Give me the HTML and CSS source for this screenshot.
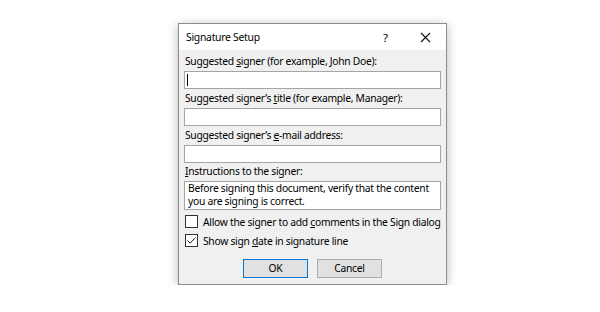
FILE: index.html
```html
<!DOCTYPE html>
<html lang="en">
<head>
    <meta charset="UTF-8">
    <title>Signature Setup</title>
    <link rel="stylesheet" href="styles.css">
</head>
<body>
    <div class="dialog">
        <div class="titlebar">
            <span class="title">Signature Setup</span>
            <span class="help">?</span>
            <svg class="close" width="11" height="11" viewBox="0 0 11 11">
                <path d="M1 1 L10 10 M10 1 L1 10" stroke="#111" stroke-width="1.1" fill="none"/>
            </svg>
        </div>
        <div class="content">
            <div class="field">
                <div class="label">Suggested <u>s</u>igner (for example, John Doe):</div>
                <div class="input"><span class="caret"></span></div>
            </div>
            <div class="field">
                <div class="label">Suggested signer’s <u>t</u>itle (for example, Manager):</div>
                <div class="input"></div>
            </div>
            <div class="field">
                <div class="label">Suggested signer’s <u>e</u>-mail address:</div>
                <div class="input"></div>
            </div>
            <div class="field notes">
                <div class="label"><u>I</u>nstructions to the signer:</div>
                <div class="input textarea">Before signing this document, verify that the content you are signing is correct.</div>
            </div>
            <div class="check-row first">
                <span class="checkbox"></span>
                <span>Allow the signer to add <u>c</u>omments in the Sign dialog</span>
            </div>
            <div class="check-row">
                <span class="checkbox">
                    <svg width="11" height="11" viewBox="0 0 11 11">
                        <path d="M1.5 5.5 L4.2 8.2 L9.5 2.5" stroke="#222" stroke-width="1" fill="none"/>
                    </svg>
                </span>
                <span>Show sign <u>d</u>ate in signature line</span>
            </div>
            <div class="buttons">
                <div class="button default">OK</div>
                <div class="button">Cancel</div>
            </div>
        </div>
    </div>
</body>
</html>
```

FILE: styles.css
```css
body {
    margin: 0;
    padding: 23px 0 0 178px;
    background: #ffffff;
    font-family: 'Noto Sans', 'Open Sans', sans-serif;
    font-size: 10.3px;
    letter-spacing: -0.28px;
    color: #000;
}
.dialog {
    width: 267px;
    height: 260px;
    background: #f0f0f0;
    border: 1px solid #8c8c8c;
    box-shadow: 0 2px 10px rgba(0, 0, 0, 0.28);
}
.titlebar {
    height: 26px;
    background: #ffffff;
    display: flex;
    align-items: center;
    padding: 0 0 0 7px;
}
.title {
    flex: 1;
    font-size: 10.4px;
}
.help {
    width: 12px;
    margin-right: 25px;
    font-size: 11.5px;
}
.close {
    margin-right: 15px;
}
.content {
    padding: 3px 5px 0 5px;
    display: flex;
    flex-direction: column;
}
.field {
    margin-bottom: 1px;
}
.label {
    height: 16px;
    line-height: 16px;
    margin-bottom: 2px;
    padding-left: 1px;
    white-space: nowrap;
}
.notes .label {
    margin-top: -1px;
}
.input {
    height: 16px;
    background: #fff;
    border: 1px solid #a5a5a5;
    position: relative;
}
.caret {
    position: absolute;
    left: 2px;
    top: 2px;
    width: 1px;
    height: 12px;
    background: #000;
}
.textarea {
    height: 27px;
    line-height: 13px;
    padding: 0 4px 0 3px;
}
.check-row {
    display: flex;
    align-items: center;
    height: 19px;
    white-space: nowrap;
}
.check-row.first {
    margin-top: 1px;
}
.checkbox {
    flex-shrink: 0;
    width: 11px;
    height: 11px;
    border: 1px solid #333;
    background: #fff;
    margin: 0 5px 0 1px;
    display: flex;
}
.buttons {
    display: flex;
    justify-content: center;
    gap: 9px;
    margin-top: 9px;
}
.button {
    width: 63px;
    height: 17px;
    line-height: 17px;
    text-align: center;
    background: #e1e1e1;
    border: 1px solid #adadad;
}
.button.default {
    border-color: #0078d7;
}
```
